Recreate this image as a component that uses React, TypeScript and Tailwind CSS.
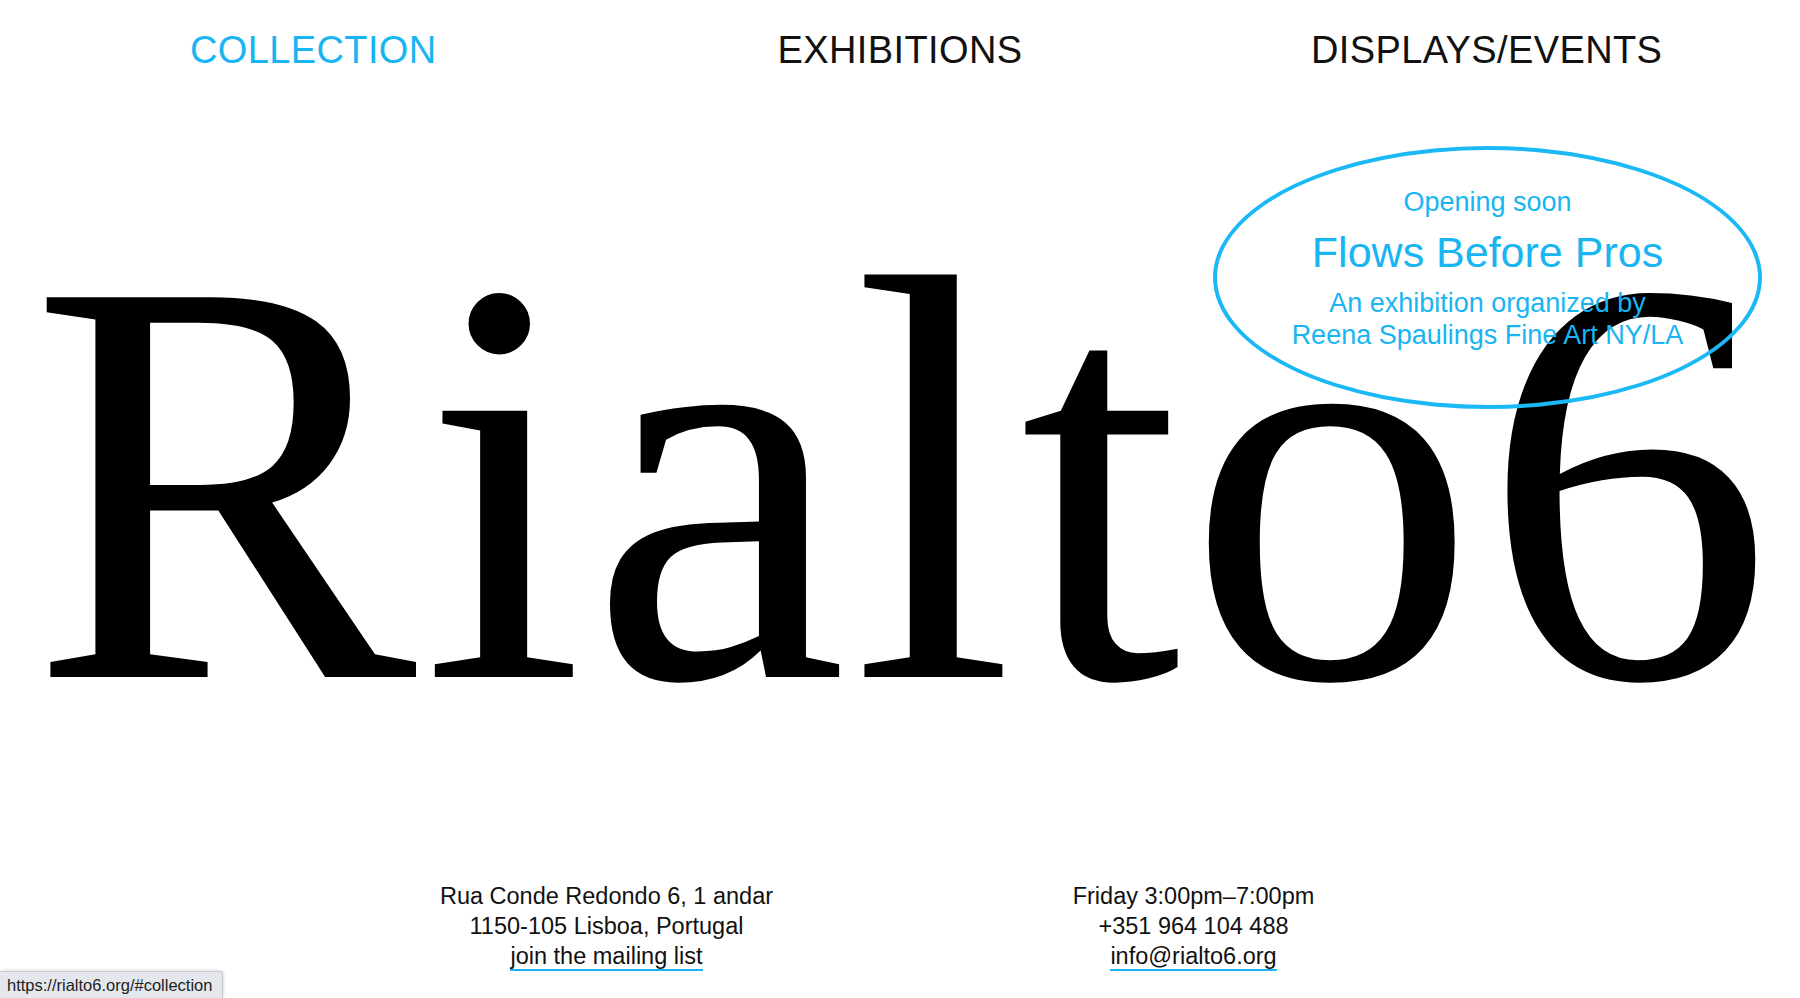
import React from 'react';

const navItems = [
  { label: 'COLLECTION', active: true },
  { label: 'EXHIBITIONS', active: false },
  { label: 'DISPLAYS/EVENTS', active: false },
];

export default function App() {
  return (
    <div className="relative h-[998px] w-full overflow-hidden bg-white font-['Liberation_Sans',Arial,sans-serif] text-[#111]">
      {/* Top navigation */}
      <nav className="grid grid-cols-3 px-5 pt-[31px]">
        {navItems.map((item) => (
          <a
            key={item.label}
            href="#"
            className={
              'text-center text-[38px] leading-none tracking-[0.01em] ' +
              (item.active ? 'text-[#18b5f2]' : 'text-[#111]')
            }
          >
            {item.label}
          </a>
        ))}
      </nav>

      {/* Wordmark */}
      <h1 className="mt-[122px] pl-[30px] font-['Liberation_Serif','Times_New_Roman',serif] text-[580px] font-normal leading-none tracking-[0.01em] text-black">
        Rialto6
      </h1>

      {/* Opening soon bubble */}
      <div className="absolute left-[1213px] top-[146px] flex h-[263px] w-[549px] flex-col items-center rounded-[50%] border-[4px] border-[#1ab8f5] pt-[36px] text-center text-[#18b5f2]">
        <p className="text-[27px] leading-[32px]">Opening soon</p>
        <p className="mt-[9px] text-[43px] leading-[50px]">Flows Before Pros</p>
        <p className="mt-[10px] text-[27px] leading-[32px]">
          An exhibition organized by
          <br />
          Reena Spaulings Fine Art NY/LA
        </p>
      </div>

      {/* Footer info */}
      <footer className="mx-auto mt-[110px] grid w-[1174px] grid-cols-2 text-center text-[23.5px] leading-[30px]">
        <div>
          <p>Rua Conde Redondo 6, 1 andar</p>
          <p>1150-105 Lisboa, Portugal</p>
          <p>
            <a href="#" className="border-b-2 border-[#18b5f2]">
              join the mailing list
            </a>
          </p>
        </div>
        <div>
          <p>Friday 3:00pm–7:00pm</p>
          <p>+351 964 104 488</p>
          <p>
            <a href="#" className="border-b-2 border-[#18b5f2]">
              info@rialto6.org
            </a>
          </p>
        </div>
      </footer>

      {/* Browser status bubble */}
      <div className="absolute bottom-0 left-0 flex h-[27px] w-[223px] items-center rounded-tr-[4px] border-r border-t border-[#c6c8cc] bg-[#e4e7eb] px-[7px] text-[16.5px] text-[#1e1e1e] shadow-[1px_-1px_3px_rgba(0,0,0,0.12)]">
        https://rialto6.org/#collection
      </div>
    </div>
  );
}
